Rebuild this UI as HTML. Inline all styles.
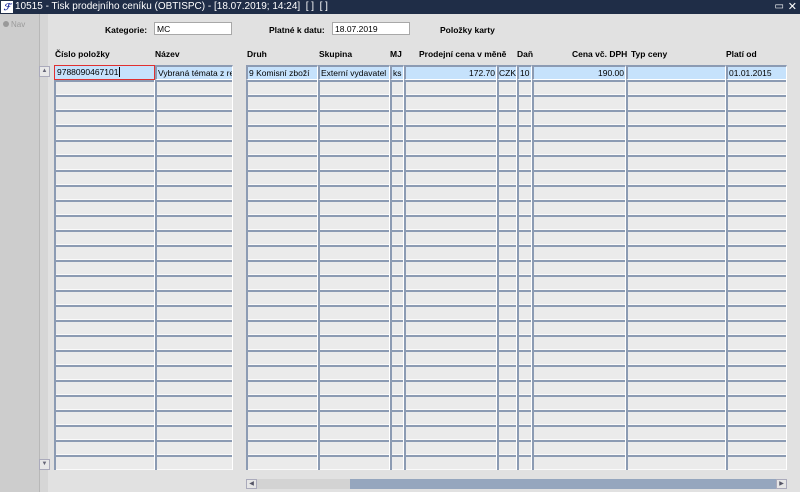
<!DOCTYPE html>
<html><head><meta charset="utf-8"><style>
body{margin:0;width:800px;height:492px;overflow:hidden;background:#e1e1e1;font-family:"Liberation Sans",Arial,sans-serif;font-size:8.5px;color:#000;position:relative}
.a{position:absolute}
.title{left:0;top:0;width:800px;height:14px;background:#1f2d47;color:#fff;font-size:10px;line-height:14px;white-space:nowrap}
.left{left:0;top:14px;width:39px;height:478px;background:#cdcdcd;border-right:1px solid #b8b8b8}
.vs{left:40px;top:14px;width:8px;height:478px;background:#d6d6d6}
.lbl{font-weight:bold;font-size:8.5px}
.inp{background:#fff;border:1px solid #a8a8a8;height:13px;line-height:12px;padding-left:2px;box-sizing:border-box}
.col{top:65px;height:405px;box-sizing:border-box;border-left:2px solid #8c9bb3;border-right:1px solid #fff;background:repeating-linear-gradient(to bottom,#8c9bb3 0 2px,#ebebeb 2px 14px,#fafafa 14px 15px)}
.r1{top:65px;height:15px;box-sizing:border-box;border-left:2px solid #8c9bb3;border-top:2px solid #8c9bb3;border-bottom:1px solid #fff;border-right:1px solid #fff;background:#c6e2fc;line-height:12px;padding:0 1px;white-space:nowrap;overflow:hidden}
.h{top:48px;font-weight:bold;font-size:8.5px;line-height:12px;white-space:nowrap}
</style></head><body>
<div class="a title"><span style="display:inline-block;width:12px;height:12px;background:#fff;color:#1a2a9a;font-size:9px;line-height:12px;text-align:center;margin:1px 2px 0 1px;vertical-align:top;font-style:italic;font-weight:bold">ℱ</span>10515 - Tisk prodejního ceníku (OBTISPC) - [18.07.2019; 14:24]&nbsp; [ ]&nbsp; [ ]
<span class="a" style="right:16px;top:0;font-size:10px">▭</span><span class="a" style="right:3px;top:0;font-size:11px">✕</span></div>
<div class="a left"></div>
<div class="a" style="left:3px;top:20px;color:#9a9a9a;font-size:8px"><span style="display:inline-block;width:6px;height:6px;border-radius:50%;background:#999;margin-right:2px"></span>Nav</div>
<div class="a vs"></div>
<div class="a" style="left:39px;top:66px;width:9px;height:9px;background:#e8e8e8;border:1px solid #aab;font-size:6px;text-align:center;line-height:9px;color:#667">▲</div>
<div class="a" style="left:39px;top:459px;width:9px;height:9px;background:#e8e8e8;border:1px solid #aab;font-size:6px;text-align:center;line-height:9px;color:#667">▼</div>

<div class="a lbl" style="left:105px;top:25px">Kategorie:</div>
<div class="a inp" style="left:154px;top:22px;width:78px">MC</div>
<div class="a lbl" style="left:269px;top:25px">Platné k datu:</div>
<div class="a inp" style="left:332px;top:22px;width:78px">18.07.2019</div>
<div class="a lbl" style="left:440px;top:25px">Položky karty</div>

<div class="a h" style="left:55px">Číslo položky</div>
<div class="a h" style="left:155px">Název</div>
<div class="a h" style="left:247px">Druh</div>
<div class="a h" style="left:319px">Skupina</div>
<div class="a h" style="left:390px">MJ</div>
<div class="a h" style="left:419px">Prodejní cena v měně</div>
<div class="a h" style="left:517px">Daň</div>
<div class="a h" style="left:572px">Cena vč. DPH</div>
<div class="a h" style="left:631px">Typ ceny</div>
<div class="a h" style="left:726px">Platí od</div>

<div class="a col" style="left:54px;width:101px"></div>
<div class="a col" style="left:155px;width:78px"></div>
<div class="a col" style="left:246px;width:72px"></div>
<div class="a col" style="left:318px;width:72px"></div>
<div class="a col" style="left:390px;width:14px"></div>
<div class="a col" style="left:404px;width:93px"></div>
<div class="a col" style="left:497px;width:20px"></div>
<div class="a col" style="left:517px;width:15px"></div>
<div class="a col" style="left:532px;width:94px"></div>
<div class="a col" style="left:626px;width:100px"></div>
<div class="a col" style="left:726px;width:61px"></div>

<div class="a r1" style="left:54px;width:101px;border:1px solid #e03030;line-height:13px;padding-left:2px">9788090467101<span style="border-left:1px solid #000;margin-left:1px"></span></div>
<div class="a r1" style="left:155px;width:78px">Vybraná témata z re</div>
<div class="a r1" style="left:246px;width:72px">9 Komisní zboží</div>
<div class="a r1" style="left:318px;width:72px">Externí vydavatel</div>
<div class="a r1" style="left:390px;width:14px">ks</div>
<div class="a r1" style="left:404px;width:93px;text-align:right">172.70</div>
<div class="a r1" style="left:497px;width:20px;padding:0">CZK</div>
<div class="a r1" style="left:517px;width:15px">10</div>
<div class="a r1" style="left:532px;width:94px;text-align:right">190.00</div>
<div class="a r1" style="left:626px;width:100px"></div>
<div class="a r1" style="left:726px;width:61px">01.01.2015</div>

<div class="a" style="left:246px;top:479px;width:541px;height:10px;background:#95a6be"></div>
<div class="a" style="left:246px;top:479px;width:104px;height:10px;background:#d3d3d3"></div>
<div class="a" style="left:246px;top:479px;width:11px;height:10px;background:#e6e6e6;border:1px solid #aab;box-sizing:border-box;font-size:6px;line-height:8px;text-align:center;color:#556">◀</div>
<div class="a" style="left:776px;top:479px;width:11px;height:10px;background:#e6e6e6;border:1px solid #aab;box-sizing:border-box;font-size:6px;line-height:8px;text-align:center;color:#556">▶</div>
</body></html>
